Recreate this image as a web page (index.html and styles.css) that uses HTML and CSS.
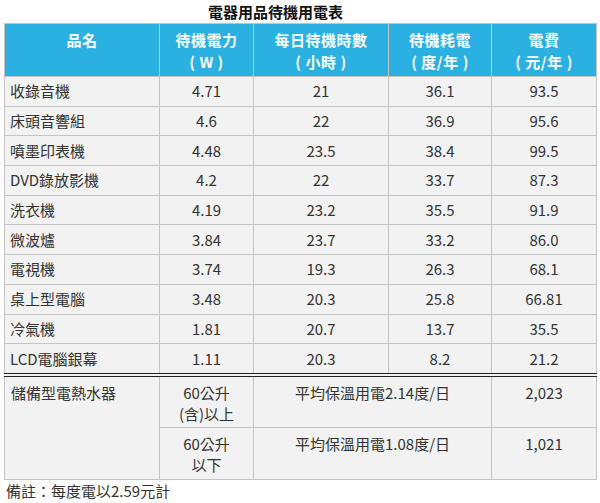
FILE: index.html
```html
<!DOCTYPE html>
<html lang="zh-Hant">
<head>
<meta charset="utf-8">
<title>電器用品待機用電表</title>
<link rel="stylesheet" href="styles.css">
</head>
<body>
<div class="page">
  <div class="title">電器用品待機用電表</div>
  <table class="power">
    <colgroup>
      <col class="c1"><col class="c2"><col class="c3"><col class="c4"><col class="c5">
    </colgroup>
    <thead>
      <tr>
        <th>品名</th>
        <th>待機電力<br><span class="po">(</span>W<span class="pc">)</span></th>
        <th>每日待機時數<br><span class="po">(</span>小時<span class="pc">)</span></th>
        <th>待機耗電<br><span class="po">(</span>度/年<span class="pc">)</span></th>
        <th>電費<br><span class="po">(</span>元/年<span class="pc">)</span></th>
      </tr>
    </thead>
    <tbody>
      <tr><td class="name">收錄音機</td><td>4.71</td><td>21</td><td>36.1</td><td>93.5</td></tr>
      <tr><td class="name">床頭音響組</td><td>4.6</td><td>22</td><td>36.9</td><td>95.6</td></tr>
      <tr><td class="name">噴墨印表機</td><td>4.48</td><td>23.5</td><td>38.4</td><td>99.5</td></tr>
      <tr><td class="name">DVD錄放影機</td><td>4.2</td><td>22</td><td>33.7</td><td>87.3</td></tr>
      <tr><td class="name">洗衣機</td><td>4.19</td><td>23.2</td><td>35.5</td><td>91.9</td></tr>
      <tr><td class="name">微波爐</td><td>3.84</td><td>23.7</td><td>33.2</td><td>86.0</td></tr>
      <tr><td class="name">電視機</td><td>3.74</td><td>19.3</td><td>26.3</td><td>68.1</td></tr>
      <tr><td class="name">桌上型電腦</td><td>3.48</td><td>20.3</td><td>25.8</td><td>66.81</td></tr>
      <tr><td class="name">冷氣機</td><td>1.81</td><td>20.7</td><td>13.7</td><td>35.5</td></tr>
      <tr class="last"><td class="name">LCD電腦銀幕</td><td>1.11</td><td>20.3</td><td>8.2</td><td>21.2</td></tr>
      <tr class="heater">
        <td class="name top" rowspan="2">儲備型電熱水器</td>
        <td class="top">60公升<br>(含)以上</td>
        <td class="top" colspan="2">平均保溫用電2.14度/日</td>
        <td class="top">2,023</td>
      </tr>
      <tr class="heater">
        <td class="top">60公升<br>以下</td>
        <td class="top" colspan="2">平均保溫用電1.08度/日</td>
        <td class="top">1,021</td>
      </tr>
    </tbody>
  </table>
  <div class="note">備註：每度電以2.59元計</div>
</div>
</body>
</html>
```
FILE: styles.css
```css
html, body {
  margin: 0;
  padding: 0;
  background: #ffffff;
}
body {
  font-family: "Noto Sans CJK TC", "Noto Sans", sans-serif;
  color: #333333;
  text-spacing-trim: space-all;
  font-feature-settings: "chws" 0, "halt" 0, "palt" 0;
}
.page {
  padding: 0 4px;
}
.title {
  height: 23px;
  line-height: 23px;
  padding-left: 204px;
  font-size: 15px;
  font-weight: bold;
  color: #111111;
}
.power {
  width: 592px;
  border-collapse: collapse;
  table-layout: fixed;
  font-size: 15px;
  background: #f2f2f2;
}
.c1 { width: 155px; }
.c2 { width: 94px; }
.c3 { width: 135px; }
.c4 { width: 103px; }
.c5 { width: 105px; }
.power th {
  background: #2bb1e1;
  color: #ffffff;
  font-weight: bold;
  line-height: 22px;
  height: 53px;
  padding: 5px 0 0;
  vertical-align: top;
  border: 1px solid #c4c4c4;
  box-sizing: border-box;
  letter-spacing: 0.5px;
}
.po {
  margin-right: 4px;
}
.pc {
  margin-left: 4px;
}
.power td {
  border: 1px solid #c4c4c4;
  text-align: center;
  padding: 0;
  height: 28.7px;
  line-height: 20px;
  vertical-align: middle;
}
.power td.name {
  text-align: left;
  padding-left: 5px;
}
.power tr.last td {
  border-bottom: 4px double #222222;
}
.power tr.heater td {
  height: 45.5px;
  line-height: 21px;
}
.power td.top {
  vertical-align: top;
  padding-top: 5px;
}
.power td.name.top {
  padding-left: 6px;
}
.note {
  font-size: 15px;
  line-height: 22px;
  padding-left: 2px;
  color: #333333;
}
```
